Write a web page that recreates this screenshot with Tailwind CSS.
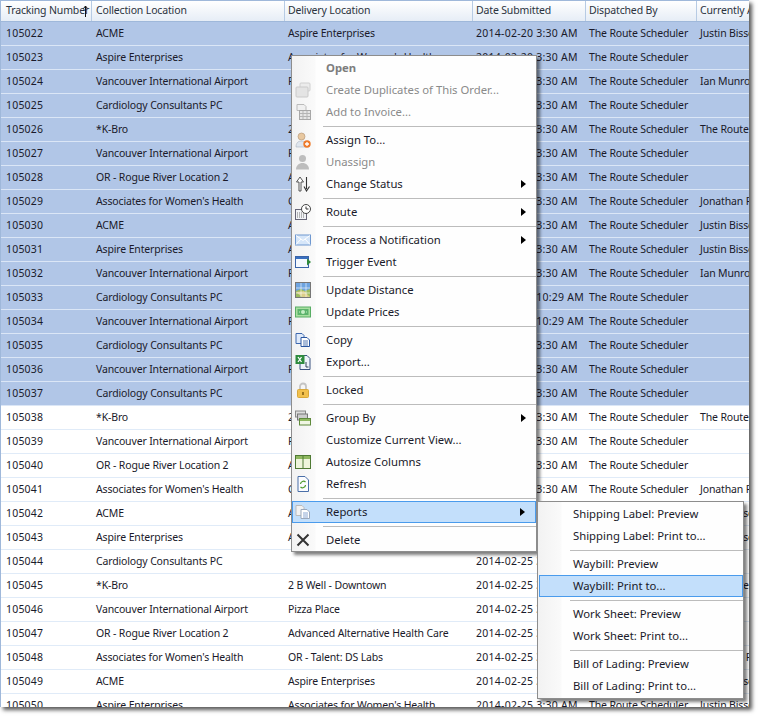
<!doctype html>
<html>
<head>
<meta charset="utf-8">
<script src="https://cdn.jsdelivr.net/npm/@tailwindcss/browser@4"></script>
</head>
<body class="bg-white">
<div class="relative w-[759px] h-[717px] overflow-hidden bg-white font-['Noto_Sans',sans-serif] text-[#1a1a2a]">

  <!-- grid window -->
  <div class="w-[749px] h-[707px] overflow-hidden bg-white border-l border-t border-[#9fb8da] text-[10.5px] tracking-[-0.15px] shadow-[3px_3px_4px_rgba(0,0,0,0.65)]">
    <div class="grid grid-cols-[91px_193px_188px_113px_111px_1fr] h-[21px] items-center bg-gradient-to-b from-white to-[#e6edf6] border-b border-[#9fb8da] text-[#2b3340]">
      <div class="h-full flex items-center pl-[5px] border-r border-[#b7cbe4] whitespace-nowrap overflow-hidden">Tracking Number</div>
      <div class="h-full flex items-center pl-[4px] border-r border-[#b7cbe4]">Collection Location</div>
      <div class="h-full flex items-center pl-[3px] border-r border-[#b7cbe4]">Delivery Location</div>
      <div class="h-full flex items-center pl-[3px] border-r border-[#b7cbe4]">Date Submitted</div>
      <div class="h-full flex items-center pl-[3px] border-r border-[#b7cbe4]">Dispatched By</div>
      <div class="h-full flex items-center pl-[3px] whitespace-nowrap overflow-hidden">Currently Assigned</div>
    </div>
    <div id="rows"></div>
  </div>

  <!-- resize cursor over the header -->
  <svg class="absolute left-[82px] top-[5px] w-[7px] h-[12px]" viewBox="0 0 7 12"><path d="M3.500 1v11M1.500 3.500L3.500 1l2 2.500" fill="none" stroke="#111"/></svg>

  <!-- context menu -->
  <div class="absolute left-[291px] top-[55px] w-[246px] h-[497px] py-[1px] pl-[1px] text-[11.3px] border border-[#8d8d8d] bg-[linear-gradient(90deg,#f2f2f2_0,#fafafa_23px,#fefefe_24px)] shadow-[3px_3px_3px_rgba(0,0,0,0.5)]">
    <div class="flex h-[22px] items-center pl-[33px] font-bold text-[#7d7d7d]">Open</div>
    <div class="flex h-[22px] items-center text-[#8a8a8a]">
      <svg class="w-[16px] h-[16px] ml-[2px] mr-[15px]" viewBox="0 0 16 16"><rect x="5" y="1" width="10" height="8" rx="1" fill="#ececec" stroke="#d0d0d0"/><rect x="1" y="5" width="12" height="10" rx="1" fill="#e4e4e4" stroke="#cacaca"/></svg>
      Create Duplicates of This Order...
    </div>
    <div class="flex h-[22px] items-center text-[#8a8a8a]">
      <svg class="w-[16px] h-[16px] ml-[2px] mr-[15px]" viewBox="0 0 16 16"><path d="M2 .5h7l2 2v4H2z" fill="#f0f0f0" stroke="#bbb"/><rect x="4.500" y="6.500" width="11" height="9" fill="#e6e6e6" stroke="#a8a8a8"/><path d="M5 9.500h10M5 12.500h10M8 7v8M12 7v8" stroke="#b5b5b5"/></svg>
      Add to Invoice...
    </div>
    <div class="h-[6px] flex items-center pl-[30px]"><div class="w-full h-px bg-[#bcbcbc]"></div></div>
    <div class="flex h-[22px] items-center">
      <svg class="w-[16px] h-[16px] ml-[2px] mr-[15px]" viewBox="0 0 16 16"><circle cx="6.500" cy="4.500" r="3.500" fill="#e8c8a0" stroke="#b09070" stroke-width=".6"/><path d="M1 15c0-4 2-6 5.500-6s5 1.500 5 6z" fill="#dfe6ee" stroke="#aab4c0" stroke-width=".6"/><circle cx="12" cy="12" r="3.700" fill="#ee7a2a"/><path d="M10 12h4M12 10v4" stroke="#fff" stroke-width="1.300"/></svg>
      Assign To...
    </div>
    <div class="flex h-[22px] items-center text-[#8a8a8a]">
      <svg class="w-[16px] h-[16px] ml-[2px] mr-[15px]" viewBox="0 0 16 16"><circle cx="7.500" cy="4.500" r="3.500" fill="#bdbdbd"/><path d="M1 15.500c0-4 3-6.500 6.500-6.500s6.500 2.500 6.500 6.500z" fill="#bdbdbd"/></svg>
      Unassign
    </div>
    <div class="flex h-[22px] items-center">
      <svg class="w-[16px] h-[16px] ml-[2px] mr-[15px]" viewBox="0 0 16 16"><path d="M4 15V6H1.500L5 1l3.500 5H6v9z" fill="#fff" stroke="#444" stroke-width=".9"/><path d="M11.500 1v12M9 10.500l2.500 4.500 3-4.500" fill="none" stroke="#333" stroke-width="1.100"/></svg>
      Change Status
      <svg class="ml-auto mr-[10px] w-[5px] h-[8px]" viewBox="0 0 5 8"><path d="M0 0l5 4-5 4z" fill="#000"/></svg>
    </div>
    <div class="h-[6px] flex items-center pl-[30px]"><div class="w-full h-px bg-[#bcbcbc]"></div></div>
    <div class="flex h-[22px] items-center">
      <svg class="w-[16px] h-[16px] ml-[2px] mr-[15px]" viewBox="0 0 16 16"><rect x=".5" y="5.500" width="11" height="10" fill="#f2f4f7" stroke="#667"/><path d="M2 9h8M2 11h8M2 13h8" stroke="#777" stroke-dasharray="1 1"/><circle cx="11" cy="5" r="4.500" fill="#fff" stroke="#444"/><path d="M11 2.500V5h2.500" fill="none" stroke="#333"/></svg>
      Route
      <svg class="ml-auto mr-[10px] w-[5px] h-[8px]" viewBox="0 0 5 8"><path d="M0 0l5 4-5 4z" fill="#000"/></svg>
    </div>
    <div class="h-[6px] flex items-center pl-[30px]"><div class="w-full h-px bg-[#bcbcbc]"></div></div>
    <div class="flex h-[22px] items-center">
      <svg class="w-[16px] h-[16px] ml-[2px] mr-[15px]" viewBox="0 0 16 16"><rect x=".5" y="3" width="15" height="10" fill="#d6e6f9" stroke="#6f98d0"/><path d="M1 3.500l7 5 7-5M1 12.500l5-5.500M15 12.500l-5-5.500" fill="none" stroke="#fff"/></svg>
      Process a Notification
      <svg class="ml-auto mr-[10px] w-[5px] h-[8px]" viewBox="0 0 5 8"><path d="M0 0l5 4-5 4z" fill="#000"/></svg>
    </div>
    <div class="flex h-[22px] items-center">
      <svg class="w-[16px] h-[16px] ml-[2px] mr-[15px]" viewBox="0 0 16 16"><rect x=".5" y="2.500" width="13" height="11" fill="#f4f8fd" stroke="#3a64a8"/><rect x="1" y="3" width="12" height="2" fill="#3a70c0"/><path d="M12 4.500L16 8l-4 3.500z" fill="#2f8a3a"/></svg>
      Trigger Event
    </div>
    <div class="h-[6px] flex items-center pl-[30px]"><div class="w-full h-px bg-[#bcbcbc]"></div></div>
    <div class="flex h-[22px] items-center">
      <svg class="w-[16px] h-[16px] ml-[2px] mr-[15px]" viewBox="0 0 16 16"><rect x=".5" y=".5" width="15" height="15" fill="#6ea4e0" stroke="#777"/><path d="M1 9l5-2 4 2 5-2v8H1z" fill="#9cbb5e"/><path d="M1 10l6 5h8l-6-6z" fill="#dbcf8a"/><path d="M6 1v14M11 1v14M1 6h14M1 11h14" stroke="#fff" stroke-opacity=".6"/></svg>
      Update Distance
    </div>
    <div class="flex h-[22px] items-center">
      <svg class="w-[16px] h-[16px] ml-[2px] mr-[15px]" viewBox="0 0 16 16"><rect x=".5" y="3" width="15" height="10" fill="#a8dfa0" stroke="#58ad64"/><rect x="2.500" y="5" width="11" height="6" fill="#5cb36c"/><circle cx="8" cy="8" r="2" fill="#c5eec5"/><path d="M4 8h1M11 8h1" stroke="#c5eec5"/></svg>
      Update Prices
    </div>
    <div class="h-[6px] flex items-center pl-[30px]"><div class="w-full h-px bg-[#bcbcbc]"></div></div>
    <div class="flex h-[22px] items-center">
      <svg class="w-[16px] h-[16px] ml-[2px] mr-[15px]" viewBox="0 0 16 16"><path d="M1 1.500h6l2 2v8H1z" fill="#dfeafa" stroke="#3e68ae"/><path d="M6 5.500h6l2.500 2.500v6.500H6z" fill="#fff" stroke="#2a56a0"/><path d="M8 9h5M8 11h5M8 13h5" stroke="#2a56a0" stroke-width=".8"/></svg>
      Copy
    </div>
    <div class="flex h-[22px] items-center">
      <svg class="w-[16px] h-[16px] ml-[2px] mr-[15px]" viewBox="0 0 16 16"><path d="M5 1.500h7l3 3v11H5z" fill="#eef3fa" stroke="#3a5280"/><rect x=".5" y="1" width="9" height="9" fill="#2e8b3e"/><path d="M3 3l3.500 5M6.500 3L3 8" stroke="#fff" stroke-width="1.300"/><path d="M11 8v5h2.500" fill="none" stroke="#345"/></svg>
      Export...
    </div>
    <div class="h-[6px] flex items-center pl-[30px]"><div class="w-full h-px bg-[#bcbcbc]"></div></div>
    <div class="flex h-[22px] items-center">
      <svg class="w-[16px] h-[16px] ml-[2px] mr-[15px]" viewBox="0 0 16 16"><path d="M5 8V4.500a3 3 0 0 1 6 0V8" fill="none" stroke="#c4c4c4" stroke-width="1.800"/><rect x="2.500" y="7.500" width="11" height="8" rx="1" fill="#f2c14e" stroke="#d9a83a"/><rect x="7" y="10" width="2" height="3" fill="#9a7420"/></svg>
      Locked
    </div>
    <div class="h-[6px] flex items-center pl-[30px]"><div class="w-full h-px bg-[#bcbcbc]"></div></div>
    <div class="flex h-[22px] items-center">
      <svg class="w-[16px] h-[16px] ml-[2px] mr-[15px]" viewBox="0 0 16 16"><rect x=".5" y="1" width="10" height="6" fill="#ddd" stroke="#888"/><rect x="2.500" y="4" width="10" height="6" fill="#ccc" stroke="#777"/><rect x="4.500" y="8.500" width="11" height="6.500" fill="#f0f6e4" stroke="#5f8a3c"/><rect x="5" y="9" width="10" height="2" fill="#8fb860"/></svg>
      Group By
      <svg class="ml-auto mr-[10px] w-[5px] h-[8px]" viewBox="0 0 5 8"><path d="M0 0l5 4-5 4z" fill="#000"/></svg>
    </div>
    <div class="flex h-[22px] items-center pl-[33px]">Customize Current View...</div>
    <div class="flex h-[22px] items-center">
      <svg class="w-[16px] h-[16px] ml-[2px] mr-[15px]" viewBox="0 0 16 16"><rect x=".5" y="1.500" width="15" height="13" fill="#eef5dc" stroke="#4f7a34"/><rect x="1" y="2" width="14" height="3" fill="#8fb860"/><path d="M8 2v12" stroke="#4f7a34"/></svg>
      Autosize Columns
    </div>
    <div class="flex h-[22px] items-center">
      <svg class="w-[16px] h-[16px] ml-[2px] mr-[15px]" viewBox="0 0 16 16"><path d="M3 .5h7l3.500 3.500v11.500H3z" fill="#fbfcff" stroke="#4a6fa8"/><path d="M5.500 8a3 3 0 0 1 5-2M10.500 9a3 3 0 0 1-5 2" fill="none" stroke="#4c9a2c" stroke-width="1.200"/></svg>
      Refresh
    </div>
    <div class="h-[6px] flex items-center pl-[30px]"><div class="w-full h-px bg-[#bcbcbc]"></div></div>
    <div class="flex h-[22px] items-center bg-[#c3dffb] border border-[#4a9bec] -ml-px w-[244px]">
      <svg class="w-[16px] h-[16px] ml-[2px] mr-[15px]" viewBox="0 0 16 16"><path d="M1 1.500h6l2 2v8H1z" fill="#f2f2f2" stroke="#bbb"/><path d="M6 5.500h6l2.500 2.500v6.500H6z" fill="#fff" stroke="#9aa8bc"/><path d="M8 9h5M8 11h5M8 13h5" stroke="#6f93c8" stroke-width=".8"/></svg>
      Reports
      <svg class="ml-auto mr-[10px] w-[5px] h-[8px]" viewBox="0 0 5 8"><path d="M0 0l5 4-5 4z" fill="#000"/></svg>
    </div>
    <div class="h-[6px] flex items-center pl-[30px]"><div class="w-full h-px bg-[#bcbcbc]"></div></div>
    <div class="flex h-[22px] items-center">
      <svg class="w-[16px] h-[16px] ml-[2px] mr-[15px]" viewBox="0 0 16 16"><path d="M2.500 2.500l11 11M13.500 2.500l-11 11" stroke="#333" stroke-width="2"/></svg>
      Delete
    </div>
  </div>

  <!-- reports submenu -->
  <div class="absolute left-[537px] top-[501px] w-[207px] h-[198px] py-[1px] pl-[1px] text-[11.3px] border border-[#8d8d8d] bg-[linear-gradient(90deg,#f2f2f2_0,#fafafa_23px,#fefefe_24px)] shadow-[3px_3px_3px_rgba(0,0,0,0.5)]">
    <div class="flex h-[22px] items-center pl-[34px]">Shipping Label: Preview</div>
    <div class="flex h-[22px] items-center pl-[34px]">Shipping Label: Print to...</div>
    <div class="h-[6px] flex items-center pl-[31px]"><div class="w-full h-px bg-[#bcbcbc]"></div></div>
    <div class="flex h-[22px] items-center pl-[34px]">Waybill: Preview</div>
    <div class="flex h-[22px] items-center pl-[33px] bg-[#c3dffb] border border-[#4a9bec] w-[204px]">Waybill: Print to...</div>
    <div class="h-[6px] flex items-center pl-[31px]"><div class="w-full h-px bg-[#bcbcbc]"></div></div>
    <div class="flex h-[22px] items-center pl-[34px]">Work Sheet: Preview</div>
    <div class="flex h-[22px] items-center pl-[34px]">Work Sheet: Print to...</div>
    <div class="h-[6px] flex items-center pl-[31px]"><div class="w-full h-px bg-[#bcbcbc]"></div></div>
    <div class="flex h-[22px] items-center pl-[34px]">Bill of Lading: Preview</div>
    <div class="flex h-[22px] items-center pl-[34px]">Bill of Lading: Print to...</div>
  </div>
</div>

<script>
  const rows = [
    ['105022','ACME','Aspire Enterprises','2014-02-20 3:30 AM','Justin Bissonnette'],
    ['105023','Aspire Enterprises',"Associates for Women's Health",'2014-02-20 3:30 AM',''],
    ['105024','Vancouver International Airport','Pizza Place','2014-02-20 3:30 AM','Ian Munro'],
    ['105025','Cardiology Consultants PC','','2014-02-20 3:30 AM',''],
    ['105026','*K-Bro','2 B Well - Downtown','2014-02-20 3:30 AM','The Route Scheduler'],
    ['105027','Vancouver International Airport','Pizza Place','2014-02-20 3:30 AM',''],
    ['105028','OR - Rogue River Location 2','Advanced Alternative Health Care','2014-02-20 3:30 AM',''],
    ['105029',"Associates for Women's Health",'OR - Talent: DS Labs','2014-02-20 3:30 AM','Jonathan Reed'],
    ['105030','ACME','Aspire Enterprises','2014-02-20 3:30 AM','Justin Bissonnette'],
    ['105031','Aspire Enterprises',"Associates for Women's Health",'2014-02-20 3:30 AM','Justin Bissonnette'],
    ['105032','Vancouver International Airport','Pizza Place','2014-02-20 3:30 AM','Ian Munro'],
    ['105033','Cardiology Consultants PC','','2014-02-20 10:29 AM',''],
    ['105034','Vancouver International Airport','Pizza Place','2014-02-20 10:29 AM',''],
    ['105035','Cardiology Consultants PC','','2014-02-20 3:30 AM',''],
    ['105036','Vancouver International Airport','Pizza Place','2014-02-20 3:30 AM',''],
    ['105037','Cardiology Consultants PC','','2014-02-20 3:30 AM',''],
    ['105038','*K-Bro','2 B Well - Downtown','2014-02-25 3:30 AM','The Route Scheduler'],
    ['105039','Vancouver International Airport','Pizza Place','2014-02-25 3:30 AM',''],
    ['105040','OR - Rogue River Location 2','Advanced Alternative Health Care','2014-02-25 3:30 AM',''],
    ['105041',"Associates for Women's Health",'OR - Talent: DS Labs','2014-02-25 3:30 AM','Jonathan Reed'],
    ['105042','ACME','Aspire Enterprises','2014-02-25 3:30 AM','Justin Bissonnette'],
    ['105043','Aspire Enterprises',"Associates for Women's Health",'2014-02-25 3:30 AM','Justin Bissonnette'],
    ['105044','Cardiology Consultants PC','','2014-02-25 3:30 AM',''],
    ['105045','*K-Bro','2 B Well - Downtown','2014-02-25 3:30 AM','The Route Scheduler'],
    ['105046','Vancouver International Airport','Pizza Place','2014-02-25 3:30 AM',''],
    ['105047','OR - Rogue River Location 2','Advanced Alternative Health Care','2014-02-25 3:30 AM',''],
    ['105048',"Associates for Women's Health",'OR - Talent: DS Labs','2014-02-25 3:30 AM','Jonathan Reed'],
    ['105049','ACME','Aspire Enterprises','2014-02-25 3:30 AM','Justin Bissonnette'],
    ['105050','Aspire Enterprises',"Associates for Women's Health",'2014-02-25 3:30 AM','Justin Bissonnette'],
  ]
  document.getElementById('rows').innerHTML = rows.map((r, i) => `
    <div class="grid grid-cols-[91px_193px_188px_113px_111px_1fr] h-[24px] items-center whitespace-nowrap border-b ${i < 16 ? 'bg-[#b1c6e7] border-[#dbe6f6]' : 'bg-white border-[#e0ebf8]'}">
      <div class="pl-[5px] overflow-hidden tracking-[0.2px]">${r[0]}</div>
      <div class="pl-[4px] overflow-hidden">${r[1]}</div>
      <div class="pl-[3px] overflow-hidden">${r[2]}</div>
      <div class="pl-[3px] overflow-hidden tracking-[0.25px]">${r[3]}</div>
      <div class="pl-[3px] overflow-hidden">The Route Scheduler</div>
      <div class="pl-[3px] overflow-hidden">${r[4]}</div>
    </div>`).join('')
</script>
</body>
</html>
